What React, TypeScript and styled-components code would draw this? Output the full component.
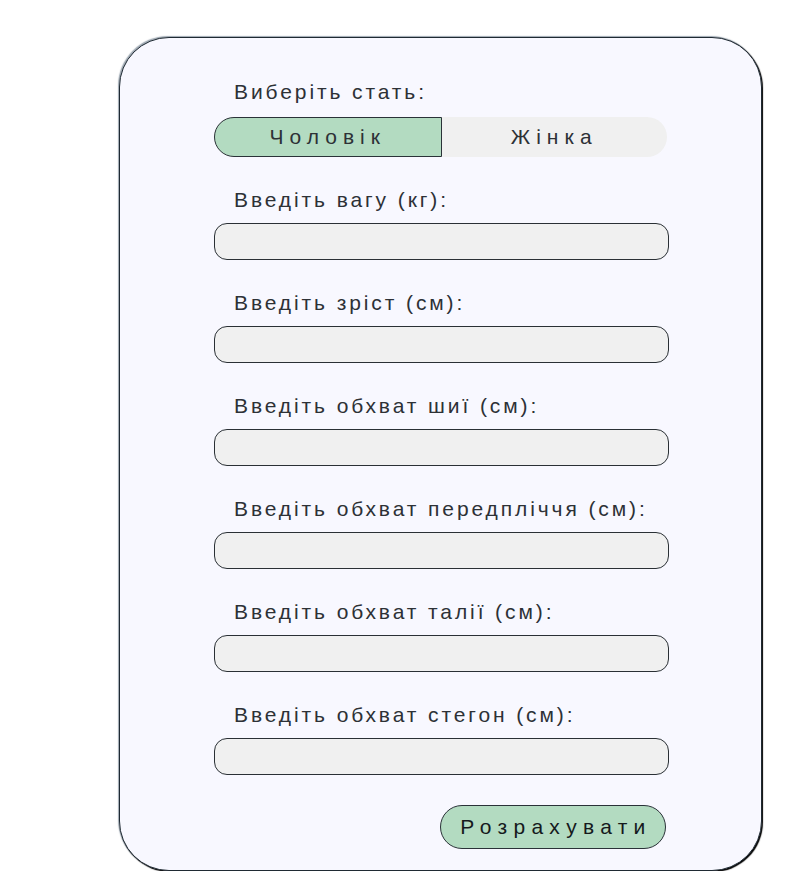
import React, { useState } from "react";
import styled, { createGlobalStyle } from "styled-components";

const Global = createGlobalStyle`
  html, body { margin: 0; padding: 0; background: #ffffff; }
  body { font-family: "Liberation Sans", Arial, sans-serif; }
  * { box-sizing: border-box; }
`;

const Page = styled.div`
  padding: 37px 0 0 119px;
`;

const Card = styled.form`
  width: 643px;
  background: #f8f8ff;
  border: 1px solid #1f2a33;
  border-radius: 50px;
  box-shadow: 1px 1px 1px #000, -1px -1px 1px rgba(60, 80, 100, 0.5);
  padding: 42px 94px 21px 94px;
  display: flex;
  flex-direction: column;
`;

const Label = styled.label`
  display: block;
  font-size: 21px;
  line-height: 24px;
  letter-spacing: 2.9px;
  color: #2d3136;
  padding-left: 20px;
`;

const Group = styled.div<{ $gap: number }>`
  display: flex;
  flex-direction: column;
  gap: ${(p) => p.$gap}px;
  margin-bottom: 31px;
`;

const Toggle = styled.div`
  display: flex;
  height: 40px;
  width: 453px;
  background: #f0f0f0;
  border-radius: 20px;
`;

const ToggleOption = styled.button<{ $active: boolean; $side: "left" | "right" }>`
  flex: 1;
  height: 40px;
  font-family: inherit;
  font-size: 21px;
  letter-spacing: 6px;
  color: #2d3136;
  background: ${(p) => (p.$active ? "#b3dbc1" : "transparent")};
  border: ${(p) => (p.$active ? "1px solid #2a3238" : "none")};
  border-radius: ${(p) => (p.$side === "left" ? "20px 0 0 20px" : "0 20px 20px 0")};
  padding: 0;
  cursor: pointer;
`;

const Input = styled.input`
  width: 455px;
  height: 37px;
  background: #f0f0f0;
  border: 1px solid #2a3035;
  border-radius: 13px;
  padding: 0 12px;
  font-size: 18px;
  font-family: inherit;
  outline: none;
`;

const Actions = styled.div`
  display: flex;
  justify-content: flex-end;
  padding-right: 1px;
  margin-top: -1px;
`;

const Submit = styled.button`
  width: 226px;
  height: 44px;
  background: #b3dbc1;
  border: 1px solid #2a3238;
  border-radius: 22px;
  font-family: inherit;
  font-size: 21px;
  letter-spacing: 6.3px;
  color: #15191c;
  padding: 0 0 0 6px;
  cursor: pointer;
`;

const fields = [
  "Введіть вагу (кг):",
  "Введіть зріст (см):",
  "Введіть обхват шиї (см):",
  "Введіть обхват передпліччя (см):",
  "Введіть обхват талії (см):",
  "Введіть обхват стегон (см):",
];

export default function App() {
  const [gender, setGender] = useState<"m" | "f">("m");
  return (
    <>
      <Global />
      <Page>
        <Card onSubmit={(e) => e.preventDefault()}>
          <Group $gap={13}>
            <Label>Виберіть стать:</Label>
            <Toggle>
              <ToggleOption type="button" $side="left" $active={gender === "m"} onClick={() => setGender("m")}>
                Чоловік
              </ToggleOption>
              <ToggleOption type="button" $side="right" $active={gender === "f"} onClick={() => setGender("f")}>
                Жінка
              </ToggleOption>
            </Toggle>
          </Group>
          {fields.map((f) => (
            <Group $gap={11} key={f}>
              <Label>{f}</Label>
              <Input type="text" />
            </Group>
          ))}
          <Actions>
            <Submit type="submit">Розрахувати</Submit>
          </Actions>
        </Card>
      </Page>
    </>
  );
}
